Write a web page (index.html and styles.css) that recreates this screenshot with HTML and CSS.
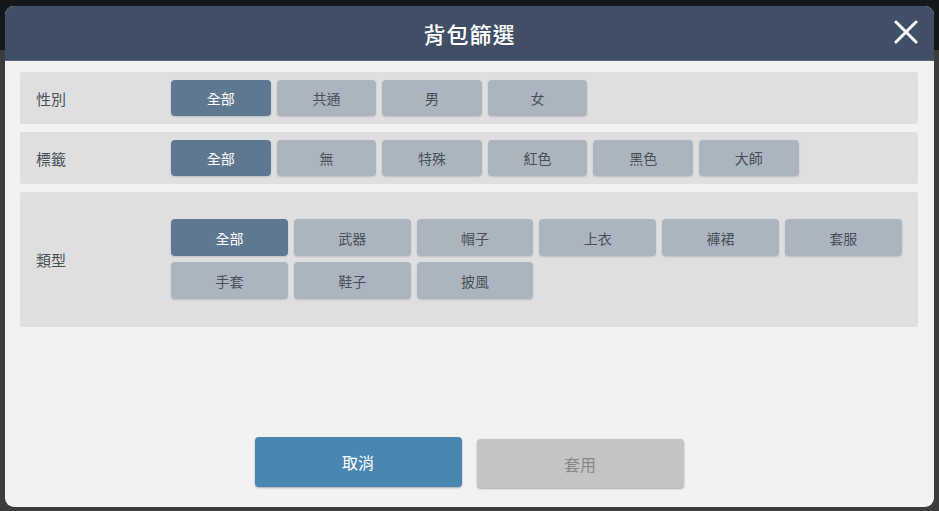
FILE: index.html
```html
<!DOCTYPE html>
<html lang="zh-Hant">
<head>
    <meta charset="UTF-8">
    <title>背包篩選</title>
    <link rel="stylesheet" href="styles.css">
</head>
<body>
    <div class="modal">
        <div class="modal-header">
            <h1>背包篩選</h1>
            <button class="close-btn" aria-label="close">
                <svg width="24" height="24" viewBox="0 0 24 24">
                    <path d="M2 2 L22 22 M22 2 L2 22" stroke="#fff" stroke-width="3" stroke-linecap="round"/>
                </svg>
            </button>
        </div>
        <div class="modal-body">
            <div class="filter-row">
                <div class="filter-label">性別</div>
                <div class="options">
                    <button class="opt active">全部</button>
                    <button class="opt">共通</button>
                    <button class="opt">男</button>
                    <button class="opt">女</button>
                </div>
            </div>
            <div class="filter-row">
                <div class="filter-label">標籤</div>
                <div class="options">
                    <button class="opt active">全部</button>
                    <button class="opt">無</button>
                    <button class="opt">特殊</button>
                    <button class="opt">紅色</button>
                    <button class="opt">黑色</button>
                    <button class="opt">大師</button>
                </div>
            </div>
            <div class="filter-row tall">
                <div class="filter-label">類型</div>
                <div class="options grid">
                    <button class="opt active">全部</button>
                    <button class="opt">武器</button>
                    <button class="opt">帽子</button>
                    <button class="opt">上衣</button>
                    <button class="opt">褲裙</button>
                    <button class="opt">套服</button>
                    <button class="opt">手套</button>
                    <button class="opt">鞋子</button>
                    <button class="opt">披風</button>
                </div>
            </div>
            <div class="actions">
                <button class="action cancel">取消</button>
                <button class="action apply">套用</button>
            </div>
        </div>
    </div>
</body>
</html>
```

FILE: styles.css
```css
* {
    box-sizing: border-box;
}

body {
    margin: 0;
    padding: 6px 5px 4px 5px;
    height: 511px;
    background: linear-gradient(#14171b 0, #14171b 50px, #3c3c3c 50px);
    font-family: "Noto Sans CJK TC", "Noto Sans", sans-serif;
    overflow: hidden;
}

.modal {
    width: 929px;
    height: 501px;
    background-color: #f2f2f2;
    border-radius: 9px;
    display: flex;
    flex-direction: column;
    overflow: hidden;
}

.modal-header {
    position: relative;
    height: 55px;
    background-color: #404f66;
    border-bottom: 1px solid #5c6a7e;
    display: flex;
    align-items: center;
    justify-content: center;
}

.modal-header h1 {
    margin: 0;
    color: #fff;
    font-size: 22px;
    font-weight: 500;
    letter-spacing: 1px;
}

.close-btn {
    position: absolute;
    right: 16px;
    top: 14px;
    background: none;
    border: none;
    padding: 0;
    width: 24px;
    height: 24px;
    cursor: pointer;
}

.modal-body {
    flex: 1;
    display: flex;
    flex-direction: column;
    gap: 8px;
    padding: 11px 16px 19px 15px;
}

.filter-row {
    display: flex;
    align-items: center;
    background-color: #dfdfdf;
    border-radius: 3px;
    padding: 8px 0;
    min-height: 52px;
}

.filter-row.tall {
    padding: 27px 0 28px;
}

.filter-label {
    width: 151px;
    padding-left: 16px;
    font-size: 15px;
    color: #4a4f57;
}

.options {
    display: flex;
    gap: 6px;
}

.options.grid {
    display: grid;
    grid-template-columns: repeat(6, 116.8px);
    gap: 6px;
}

.opt {
    width: 99.6px;
    height: 36px;
    border: none;
    border-radius: 4px;
    background-color: #abb5c0;
    color: #4a4f57;
    font-family: inherit;
    font-size: 14px;
    box-shadow: 0 1px 2px rgba(0, 0, 0, 0.15);
    cursor: pointer;
}

.options.grid .opt {
    width: 116.8px;
    height: 37px;
}

.opt.active {
    background-color: #5f7892;
    color: #fff;
}

.actions {
    margin-top: auto;
    display: flex;
    justify-content: center;
    gap: 15px;
}

.action {
    width: 207px;
    height: 50px;
    border: none;
    border-radius: 4px;
    font-family: inherit;
    font-size: 16px;
    box-shadow: 0 1px 2px rgba(0, 0, 0, 0.3);
    cursor: pointer;
}

.cancel {
    background-color: #4a87b0;
    color: #fff;
}

.apply {
    background-color: #c4c4c4;
    color: #888;
    margin-top: 2px;
    height: 49px;
}
```
